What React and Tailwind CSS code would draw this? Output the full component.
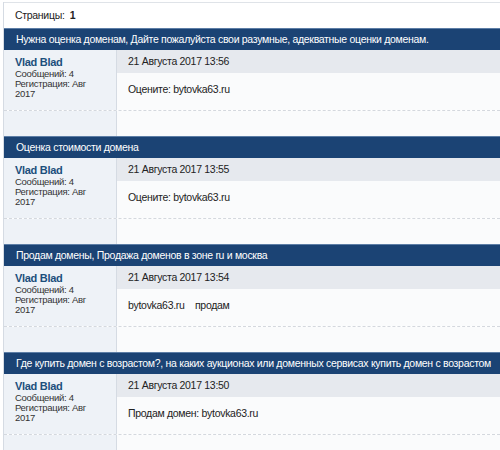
const posts = [
    {
        title: 'Нужна оценка доменам, Дайте пожалуйста свои разумные, адекватные оценки доменам.',
        date: '21 Августа 2017 13:56',
        text: 'Оцените: bytovka63.ru',
    },
    {
        title: 'Оценка стоимости домена',
        date: '21 Августа 2017 13:55',
        text: 'Оцените: bytovka63.ru',
    },
    {
        title: 'Продам домены, Продажа доменов в зоне ru и москва',
        date: '21 Августа 2017 13:54',
        text: 'bytovka63.ru\u00a0\u00a0\u00a0 продам',
    },
    {
        title: 'Где купить домен с возрастом?, на каких аукционах или доменных сервисах купить домен с возрастом',
        date: '21 Августа 2017 13:50',
        text: 'Продам домен: bytovka63.ru',
    },
];

function Post({ post }) {
    return (
        <div>
            <div className="h-[22px] bg-[#1b4374] border-t border-[#5d7ea6] pl-[12px] flex items-center text-white text-[10.5px] tracking-[-0.3px] whitespace-nowrap">
                {post.title}
            </div>
            <div className="flex flex-col">
                <div className="flex h-[61px] border-b border-dashed border-[#d4d8de]">
                    <div className="w-[113px] shrink-0 bg-[#eef2f7] border-r border-[#d5dbe3] pl-[11px] pt-[6px] leading-[10px]">
                        <div className="text-[11px] font-bold text-[#1c4f7c] leading-[13px] tracking-[-0.3px]">Vlad Blad</div>
                        <div className="text-[9.5px] text-[#333] tracking-[-0.3px]">Сообщений: 4</div>
                        <div className="text-[9.5px] text-[#333] tracking-[-0.3px]">Регистрация: Авг</div>
                        <div className="text-[9.5px] text-[#333] tracking-[-0.3px]">2017</div>
                    </div>
                    <div className="flex-1 flex flex-col bg-[#fafbfc]">
                        <div className="h-[23px] bg-[#e6e9ee] pl-[11px] flex items-center text-[10.5px] tracking-[-0.3px] text-[#222]">
                            {post.date}
                        </div>
                        <div className="pl-[11px] pt-[9px] text-[10.5px] tracking-[-0.3px] text-[#222]">{post.text}</div>
                    </div>
                </div>
                <div className="flex h-[25px]">
                    <div className="w-[113px] shrink-0 bg-[#eef2f7] border-r border-[#d5dbe3]" />
                    <div className="flex-1 bg-[#fafbfc]" />
                </div>
            </div>
        </div>
    );
}

export default function App() {
    return (
        <div className="w-[500px] h-[450px] overflow-hidden bg-white pt-[2px] pl-[3px]" style={{ fontFamily: '"Liberation Sans", Arial, sans-serif' }}>
            <div className="border-l border-[#d5dbe3]">
                <div className="h-[26px] border-t border-[#dfe3e8] pl-[11px] flex items-center text-[10.5px] tracking-[-0.3px] text-[#222]">
                    Страницы:&nbsp;&nbsp; <span className="font-bold">1</span>
                </div>
                {posts.map((post, i) => (
                    <Post key={i} post={post} />
                ))}
            </div>
        </div>
    );
}
